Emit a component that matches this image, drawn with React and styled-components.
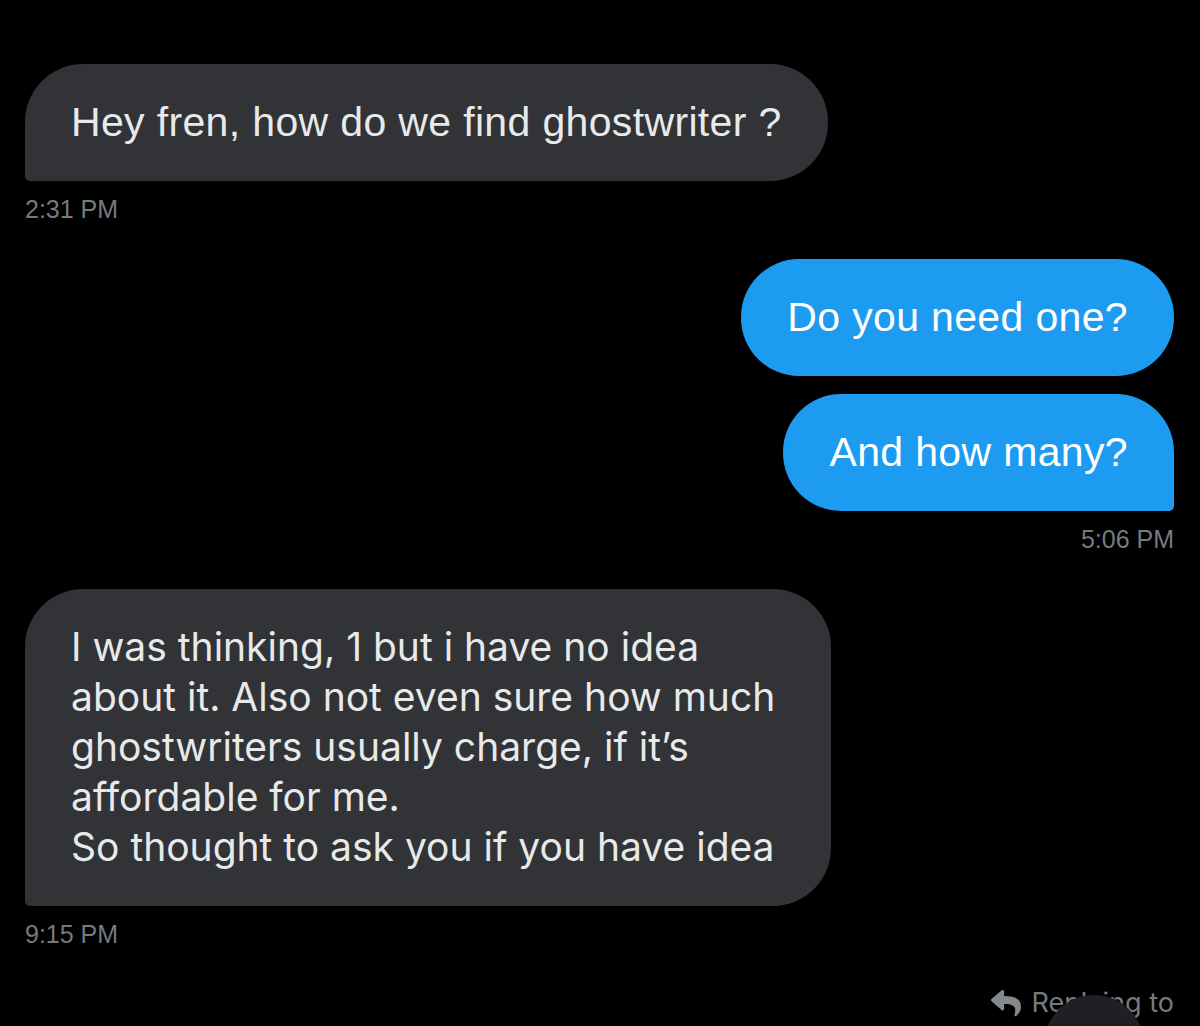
import styled, {createGlobalStyle} from 'styled-components'
import {FaReply} from 'react-icons/fa'

const GlobalStyle = createGlobalStyle`
  html, body {
    margin: 0;
    padding: 0;
    background-color: #000000;
  }
  body {
    font-family: 'Liberation Sans', Arial, sans-serif;
  }
`

const Thread = styled.main`
  position: relative;
  display: flex;
  flex-direction: column;
  width: 1200px;
  height: 1026px;
  box-sizing: border-box;
  padding: 64px 26px 0 25px;
  overflow: hidden;
  background-color: #000000;
`

const Group = styled.section`
  display: flex;
  flex-direction: column;
  align-items: ${props => (props.mine ? 'flex-end' : 'flex-start')};
  gap: 18px;
  margin-bottom: 35px;
`

const Bubble = styled.div`
  box-sizing: border-box;
  padding: ${props => (props.chirp ? '33px 56px 34px 46px' : '33px 46px 34px')};
  border-radius: ${props => {
    if (props.tail && props.mine) return '58px 58px 5px 58px'
    if (props.tail) return '58px 58px 58px 5px'
    return '58px'
  }};
  background-color: ${props => (props.mine ? '#1d9bf0' : '#313336')};
  color: ${props => (props.mine ? '#ffffff' : '#e7e9ea')};
  font-family: ${props =>
    props.chirp
      ? "Inter, 'Noto Sans', sans-serif"
      : "'Liberation Sans', Arial, sans-serif"};
  font-size: ${props => (props.chirp ? '39px' : '41px')};
  letter-spacing: ${props => (props.chirp ? '0' : '0.35px')};
  line-height: 50px;
  white-space: pre-line;
`

const Time = styled.span`
  margin-top: -5px;
  color: #767a7f;
  font-size: 25px;
  line-height: 30px;
`

const Footer = styled.footer`
  display: flex;
  justify-content: flex-end;
  align-items: center;
  gap: 10px;
  margin-top: 4px;
  color: #767a7f;
  font-family: Inter, 'Noto Sans', sans-serif;
  font-size: 27px;
  line-height: 30px;
`

const ReplyIcon = styled(FaReply)`
  color: #85898d;
`

const Avatar = styled.div`
  position: absolute;
  left: 1044px;
  top: 995px;
  width: 100px;
  height: 100px;
  border-radius: 50%;
  background-color: #1e2023;
`

const messages = [
  {
    id: 1,
    mine: false,
    time: '2:31 PM',
    texts: ['Hey fren, how do we find ghostwriter ?'],
  },
  {
    id: 2,
    mine: true,
    time: '5:06 PM',
    texts: ['Do you need one?', 'And how many?'],
  },
  {
    id: 3,
    mine: false,
    chirp: true,
    time: '9:15 PM',
    texts: [
      'I was thinking, 1 but i have no idea\nabout it. Also not even sure how much\nghostwriters usually charge, if it’s\naffordable for me.\nSo thought to ask you if you have idea',
    ],
  },
]

const App = () => (
  <>
    <GlobalStyle />
    <Thread>
      {messages.map(msg => (
        <Group key={msg.id} mine={msg.mine}>
          {msg.texts.map((text, i) => (
            <Bubble
              key={text}
              mine={msg.mine}
              chirp={msg.chirp}
              tail={i === msg.texts.length - 1}
            >
              {text}
            </Bubble>
          ))}
          <Time>{msg.time}</Time>
        </Group>
      ))}
      <Footer>
        <ReplyIcon size={30} />
        <span>Replying to</span>
      </Footer>
      <Avatar />
    </Thread>
  </>
)

export default App
